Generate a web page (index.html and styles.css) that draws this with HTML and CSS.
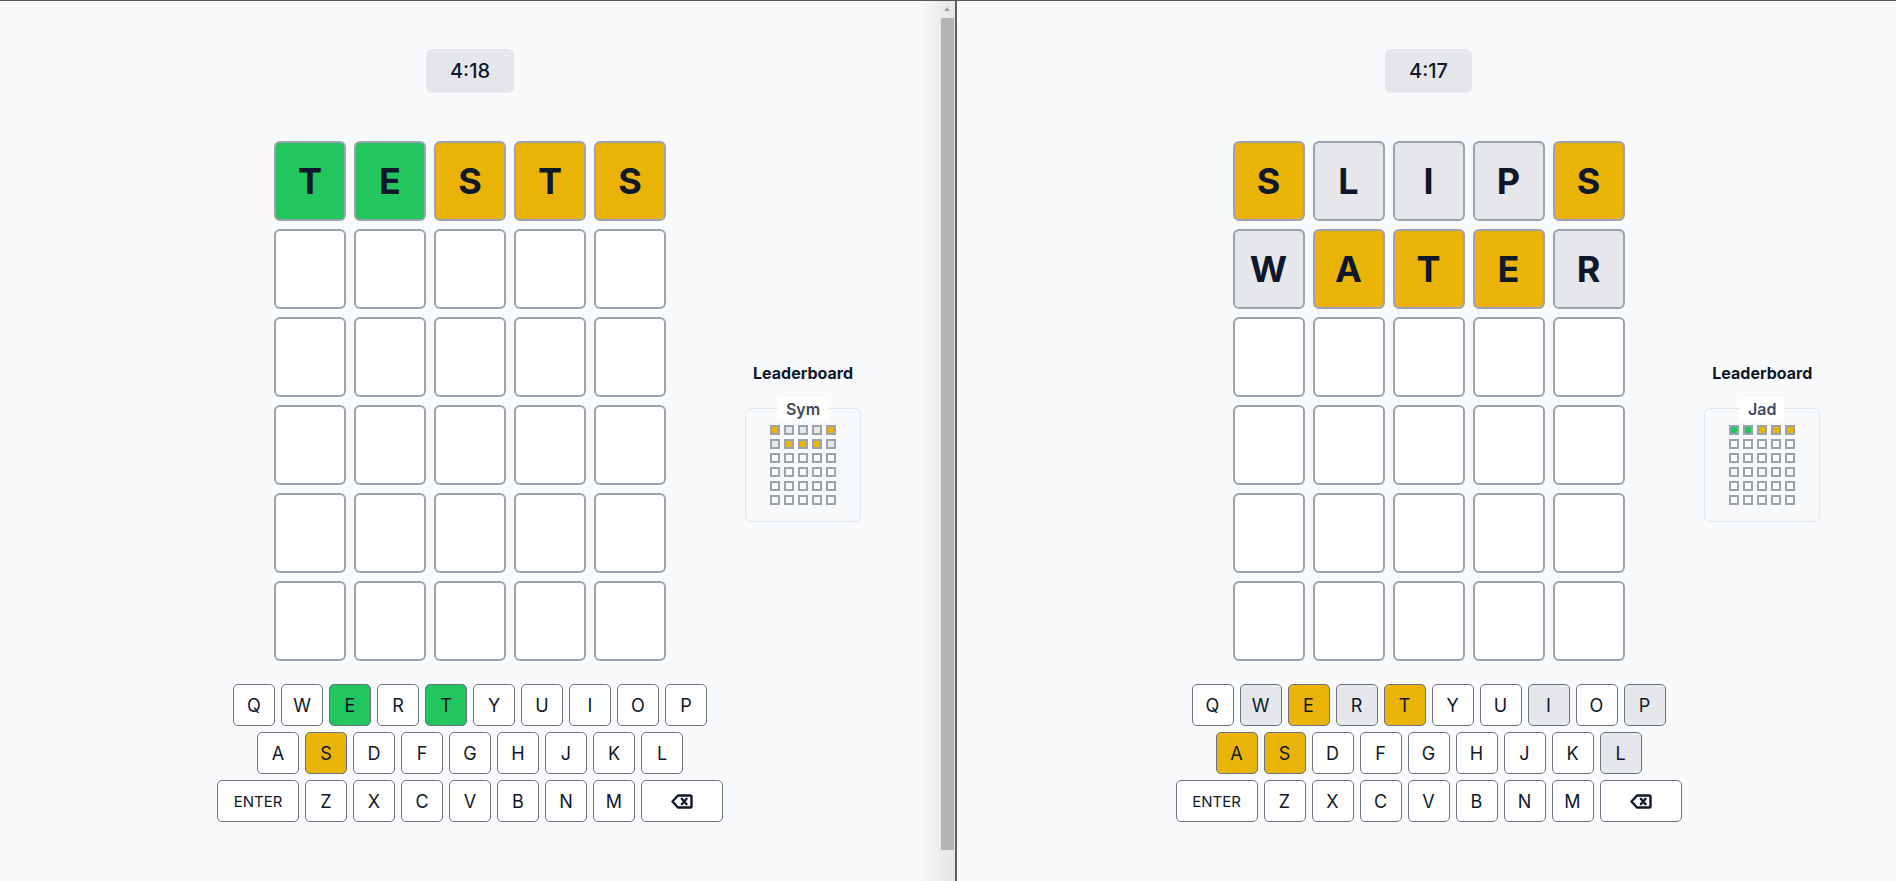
FILE: index.html
```html
<!DOCTYPE html>
<html lang="en">
<head>
<meta charset="utf-8">
<title>Wordle Duel</title>
<link rel="stylesheet" href="styles.css">
</head>
<body>
<div class="screen">
  <div class="frame frame-left">
    <div class="view view-shadow">
      <div class="game">
        <div class="timer">4:18</div>
        <div class="board">
          <div class="tile g">T</div><div class="tile g">E</div><div class="tile y">S</div><div class="tile y">T</div><div class="tile y">S</div>
          <div class="tile"></div><div class="tile"></div><div class="tile"></div><div class="tile"></div><div class="tile"></div>
          <div class="tile"></div><div class="tile"></div><div class="tile"></div><div class="tile"></div><div class="tile"></div>
          <div class="tile"></div><div class="tile"></div><div class="tile"></div><div class="tile"></div><div class="tile"></div>
          <div class="tile"></div><div class="tile"></div><div class="tile"></div><div class="tile"></div><div class="tile"></div>
          <div class="tile"></div><div class="tile"></div><div class="tile"></div><div class="tile"></div><div class="tile"></div>
        </div>
        <div class="keyboard">
          <div class="krow">
            <div class="key">Q</div><div class="key">W</div><div class="key g">E</div><div class="key">R</div><div class="key g">T</div><div class="key">Y</div><div class="key">U</div><div class="key">I</div><div class="key">O</div><div class="key">P</div>
          </div>
          <div class="krow">
            <div class="key">A</div><div class="key y">S</div><div class="key">D</div><div class="key">F</div><div class="key">G</div><div class="key">H</div><div class="key">J</div><div class="key">K</div><div class="key">L</div>
          </div>
          <div class="krow">
            <div class="key wide enter">ENTER</div><div class="key">Z</div><div class="key">X</div><div class="key">C</div><div class="key">V</div><div class="key">B</div><div class="key">N</div><div class="key">M</div>
            <div class="key wide"><svg class="bksp" width="22" height="15" viewBox="0 0 22 15" fill="none" stroke="#0f172a" stroke-width="2.4" stroke-linejoin="round" stroke-linecap="round"><path d="M7 1.5H19.2a1.3 1.3 0 0 1 1.3 1.3V12.2a1.3 1.3 0 0 1-1.3 1.3H7L1.5 7.5Z"/><path d="M10.8 4.8L15.6 10.2M15.6 4.8L10.8 10.2"/></svg></div>
          </div>
        </div>
      </div>
      <div class="side">
        <div class="lb-title">Leaderboard</div>
        <fieldset class="card">
          <legend class="card-name">Sym</legend>
          <div class="mini">
            <span class="m y"></span><span class="m a"></span><span class="m a"></span><span class="m a"></span><span class="m y"></span>
            <span class="m a"></span><span class="m y"></span><span class="m y"></span><span class="m y"></span><span class="m a"></span>
            <span class="m"></span><span class="m"></span><span class="m"></span><span class="m"></span><span class="m"></span>
            <span class="m"></span><span class="m"></span><span class="m"></span><span class="m"></span><span class="m"></span>
            <span class="m"></span><span class="m"></span><span class="m"></span><span class="m"></span><span class="m"></span>
            <span class="m"></span><span class="m"></span><span class="m"></span><span class="m"></span><span class="m"></span>
          </div>
        </fieldset>
      </div>
    </div>
    <div class="scrollbar">
      <div class="sb-arrow"></div>
      <div class="sb-thumb"></div>
    </div>
  </div>

  <div class="frame frame-right">
    <div class="view">
      <div class="game">
        <div class="timer">4:17</div>
        <div class="board">
          <div class="tile y">S</div><div class="tile a">L</div><div class="tile a">I</div><div class="tile a">P</div><div class="tile y">S</div>
          <div class="tile a">W</div><div class="tile y">A</div><div class="tile y">T</div><div class="tile y">E</div><div class="tile a">R</div>
          <div class="tile"></div><div class="tile"></div><div class="tile"></div><div class="tile"></div><div class="tile"></div>
          <div class="tile"></div><div class="tile"></div><div class="tile"></div><div class="tile"></div><div class="tile"></div>
          <div class="tile"></div><div class="tile"></div><div class="tile"></div><div class="tile"></div><div class="tile"></div>
          <div class="tile"></div><div class="tile"></div><div class="tile"></div><div class="tile"></div><div class="tile"></div>
        </div>
        <div class="keyboard">
          <div class="krow">
            <div class="key">Q</div><div class="key a">W</div><div class="key y">E</div><div class="key a">R</div><div class="key y">T</div><div class="key">Y</div><div class="key">U</div><div class="key a">I</div><div class="key">O</div><div class="key a">P</div>
          </div>
          <div class="krow">
            <div class="key y">A</div><div class="key y">S</div><div class="key">D</div><div class="key">F</div><div class="key">G</div><div class="key">H</div><div class="key">J</div><div class="key">K</div><div class="key a">L</div>
          </div>
          <div class="krow">
            <div class="key wide enter">ENTER</div><div class="key">Z</div><div class="key">X</div><div class="key">C</div><div class="key">V</div><div class="key">B</div><div class="key">N</div><div class="key">M</div>
            <div class="key wide"><svg class="bksp" width="22" height="15" viewBox="0 0 22 15" fill="none" stroke="#0f172a" stroke-width="2.4" stroke-linejoin="round" stroke-linecap="round"><path d="M7 1.5H19.2a1.3 1.3 0 0 1 1.3 1.3V12.2a1.3 1.3 0 0 1-1.3 1.3H7L1.5 7.5Z"/><path d="M10.8 4.8L15.6 10.2M15.6 4.8L10.8 10.2"/></svg></div>
          </div>
        </div>
      </div>
      <div class="side">
        <div class="lb-title">Leaderboard</div>
        <fieldset class="card">
          <legend class="card-name">Jad</legend>
          <div class="mini">
            <span class="m g"></span><span class="m g"></span><span class="m y"></span><span class="m y"></span><span class="m y"></span>
            <span class="m"></span><span class="m"></span><span class="m"></span><span class="m"></span><span class="m"></span>
            <span class="m"></span><span class="m"></span><span class="m"></span><span class="m"></span><span class="m"></span>
            <span class="m"></span><span class="m"></span><span class="m"></span><span class="m"></span><span class="m"></span>
            <span class="m"></span><span class="m"></span><span class="m"></span><span class="m"></span><span class="m"></span>
            <span class="m"></span><span class="m"></span><span class="m"></span><span class="m"></span><span class="m"></span>
          </div>
        </fieldset>
      </div>
    </div>
  </div>
</div>
</body>
</html>
```

FILE: styles.css
```css
* { box-sizing: border-box; }

html, body {
  margin: 0;
  padding: 0;
  background: #f9fafc;
  font-family: Inter, "Noto Sans", "Liberation Sans", sans-serif;
  color: #0f172a;
  overflow: hidden;
}

.screen {
  display: flex;
  width: 1896px;
  height: 881px;
  border-top: 1px solid #575757;
  overflow: hidden;
}

.frame {
  display: flex;
  flex-shrink: 0;
  height: 880px;
}

.frame-left {
  width: 957px;
  border-right: 2px solid #5e5e5e;
}

.frame-right {
  width: 943px;
}

.view {
  flex: 1;
  display: grid;
  grid-template-columns: 1fr 392px 1fr;
  height: 880px;
}

.view-shadow {
  background: linear-gradient(to right, rgba(0,0,0,0) calc(100% - 22px), rgba(0,0,0,0.05));
}

.game {
  grid-column: 2;
  display: flex;
  flex-direction: column;
  align-items: center;
  padding-top: 48px;
}

.timer {
  background: #e5e7eb;
  border-radius: 6px;
  padding: 8px 24px;
  font-size: 20px;
  line-height: 28px;
  font-weight: 500;
  color: #0f172a;
}

.board {
  margin-top: 48px;
  display: grid;
  grid-template-columns: repeat(5, 72px);
  grid-auto-rows: 80px;
  gap: 8px;
}

.tile {
  border: 2px solid #9ca3af;
  border-radius: 6px;
  background: #ffffff;
  display: flex;
  align-items: center;
  justify-content: center;
  font-size: 36px;
  font-weight: 700;
  color: #0f172a;
}

.tile.g, .key.g, .m.g { background: #22c55e; }
.tile.y, .key.y, .m.y { background: #eab308; }
.tile.a, .key.a, .m.a { background: #e5e7eb; }

.keyboard {
  margin-top: 23px;
  display: flex;
  flex-direction: column;
  align-items: center;
  gap: 6px;
}

.krow {
  display: flex;
  gap: 6px;
}

.key {
  width: 42px;
  height: 42px;
  border: 1px solid #6b7280;
  border-radius: 5px;
  background: #ffffff;
  display: flex;
  align-items: center;
  justify-content: center;
  font-size: 18px;
  font-weight: 400;
  color: #0f172a;
}

.key.wide { width: 82px; }
.key.enter { font-size: 15px; }
.bksp { display: block; }

.side {
  grid-column: 3;
  align-self: center;
  justify-self: center;
  display: flex;
  flex-direction: column;
  align-items: center;
}

.lb-title {
  font-size: 16px;
  line-height: 24px;
  font-weight: 700;
  color: #0f172a;
  margin-bottom: 13px;
}

.card {
  margin: 0;
  min-width: 0;
  border: 1px solid #e2e8f0;
  border-radius: 6px;
  padding: 5px 24px 16px;
}

.card-name {
  margin: 0 auto;
  padding: 0 8px;
  background: #ffffff;
  font-size: 16px;
  line-height: 22px;
  font-weight: 600;
  color: #3f4a5c;
}

.mini {
  display: grid;
  grid-template-columns: repeat(5, 10px);
  grid-auto-rows: 10px;
  gap: 4px;
}

.m {
  border: 2px solid #9ca3af;
  background: #ffffff;
}

.scrollbar {
  width: 15px;
  height: 880px;
  background: linear-gradient(to right, #ececec, #e6e6e6);
  display: flex;
  flex-direction: column;
}

.sb-arrow {
  margin: 6px 0 0 4px;
  width: 0;
  height: 0;
  border-left: 3.5px solid transparent;
  border-right: 3.5px solid transparent;
  border-bottom: 4px solid #a3a3a3;
}

.sb-thumb {
  margin: 7px 0 0 1px;
  width: 13px;
  height: 832px;
  background: #b3b3b3;
}
```
